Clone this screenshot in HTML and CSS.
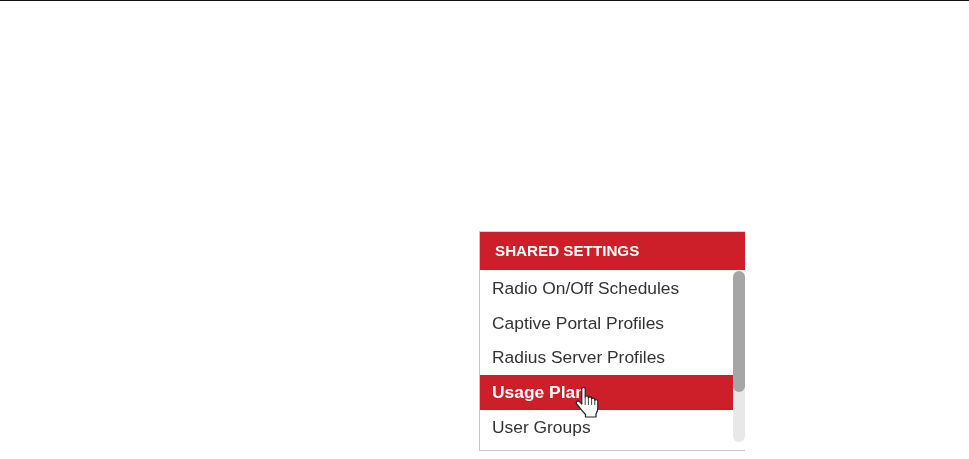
FILE: index.html
```html
<!DOCTYPE html>
<html lang="en">
<head>
  <meta charset="UTF-8">
  <title>Shared Settings</title>
  <link rel="stylesheet" href="styles.css">
</head>
<body>
  <div class="top-rule"></div>

  <div class="panel">
    <div class="panel-title">SHARED SETTINGS</div>
    <div class="panel-body">
      <ul class="menu">
        <li>Radio On/Off Schedules</li>
        <li>Captive Portal Profiles</li>
        <li>Radius Server Profiles</li>
        <li class="active">Usage Plan
          <svg class="cursor" width="26" height="34" viewBox="0 0 26 34">
            <path d="M6.800 3C6.800 .8 10.200 .8 10.200 3V11C10.200 9.400 13.400 9.400 13.400 11V12C13.400 10.600 16.600 10.600 16.600 12V13C16.600 11.800 19.800 11.800 19.800 13.400V14.500C19.800 13.400 22.800 13.400 22.800 15V22C22.800 25 21.600 26.500 21 28V31H10.500V28.500C8 26 5 22 2 18.500C0 16 2.800 13.800 4.800 15.800L6.800 18Z" fill="#fff" stroke="#222" stroke-width="1.200" stroke-linejoin="round"/>
            <path d="M10.200 11V19M13.400 12V19M16.600 13V19M19.800 14V19" fill="none" stroke="#444" stroke-width="1"/>
          </svg>
        </li>
        <li>User Groups</li>
      </ul>
      <div class="scroll-track"><div class="scroll-thumb"></div></div>
    </div>
  </div>
</body>
</html>
```

FILE: styles.css
```css
body {
  margin: 0;
  background: white;
  font-family: "Liberation Sans", Arial, sans-serif;
}

.top-rule {
  height: 1px;
  background: #111;
}

.panel {
  width: 265px;
  margin: 230px 0 0 479px;
  border-top: 1px solid #d5d5d5;
  border-left: 1px solid #c8c8c8;
  border-bottom: 1px solid #c8c4c4;
  filter: blur(0.45px);
}

.panel-title {
  height: 38px;
  line-height: 38px;
  padding-left: 15px;
  background: #cd1f2a;
  color: white;
  font-size: 15.2px;
  font-weight: bold;
}

.panel-body {
  display: flex;
  height: 180px;
}

.menu {
  flex: 1;
  margin: 0;
  padding: 1px 0 0;
  list-style: none;
  font-size: 17.4px;
  color: #333;
}

.menu li {
  position: relative;
  box-sizing: border-box;
  height: 34.67px;
  line-height: 35px;
  padding-left: 12px;
}

.menu li.active {
  background: #cd1f2a;
  color: white;
  font-weight: bold;
}

.cursor {
  position: absolute;
  left: 95px;
  top: 11px;
}

.scroll-track {
  width: 12px;
  height: 171px;
  margin-top: 1px;
  background: #e8e8e8;
  border-radius: 6px;
}

.scroll-thumb {
  height: 121px;
  background: #a6a6a6;
  border-radius: 6px;
}
```
